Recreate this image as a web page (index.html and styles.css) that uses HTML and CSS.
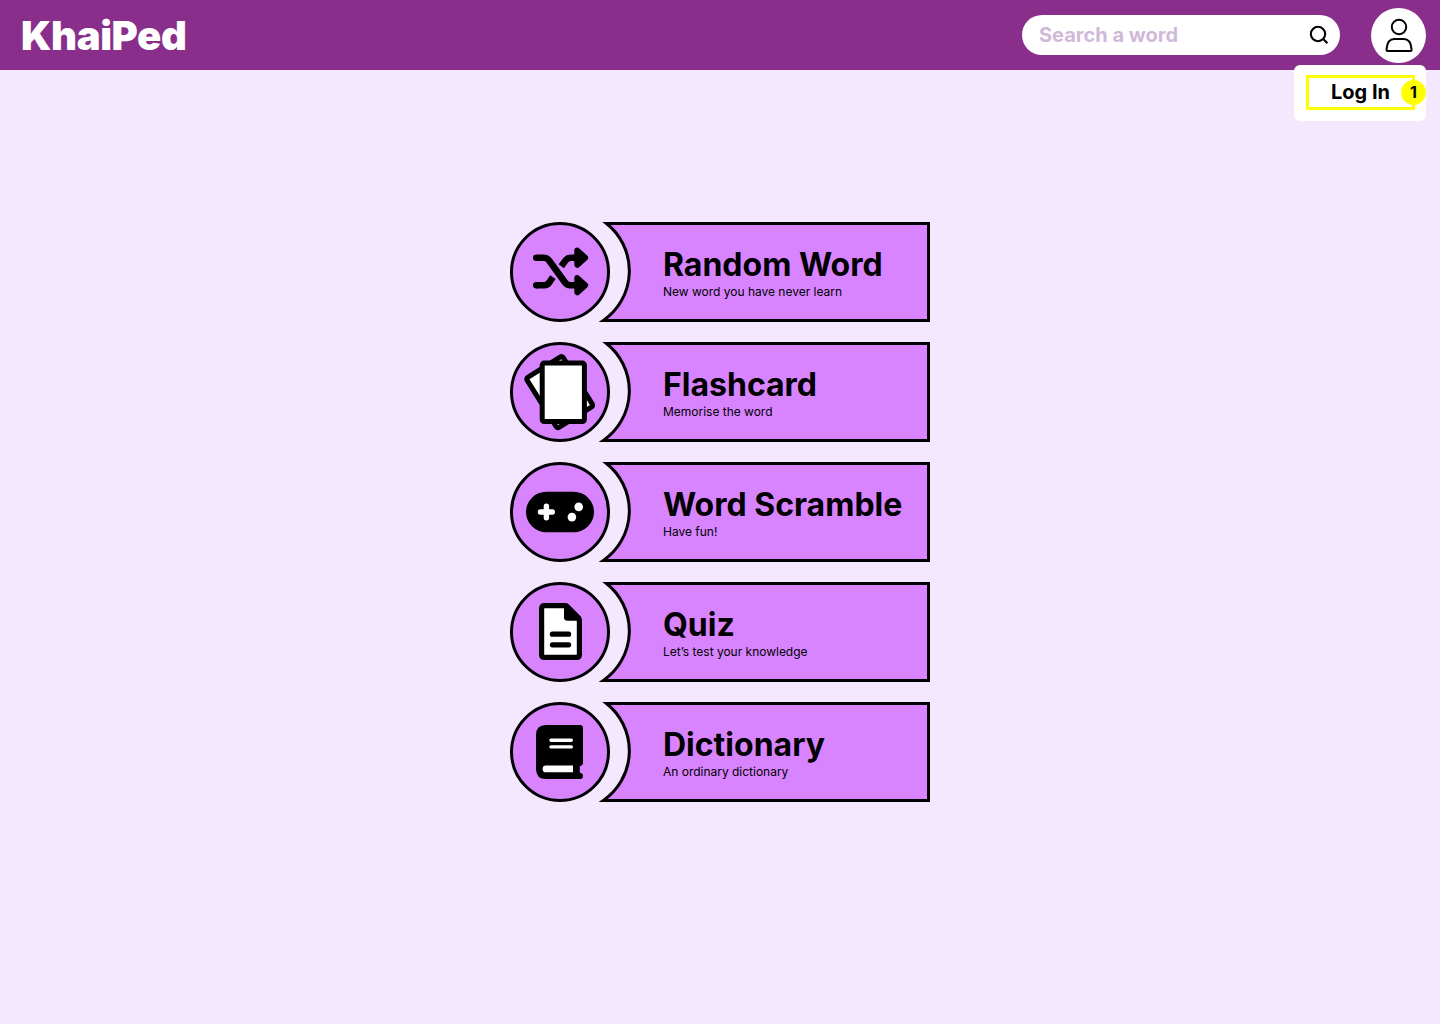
FILE: index.html
```html
<!DOCTYPE html>
<html lang="en">
<head>
<meta charset="utf-8">
<title>KhaiPed</title>
<link rel="stylesheet" href="styles.css">
</head>
<body>
<svg width="0" height="0" class="defs">
  <symbol id="plate" viewBox="0 0 420 100">
    <path d="M96.5 1.5H418.5V98.5H93.4A60.5 60.5 0 0 0 96.5 1.5Z" fill="#d884ff" stroke="#000" stroke-width="3" stroke-miterlimit="10"/>
    <circle cx="50" cy="50" r="48.5" fill="#d884ff" stroke="#000" stroke-width="3"/>
  </symbol>
</svg>
<header class="header">
  <a class="logo">KhaiPed</a>
  <div class="search">
    <span class="search-text">Search a word</span>
    <svg class="search-icon" width="22" height="22" viewBox="0 0 22 22" fill="none" stroke="#000" stroke-width="2.1">
      <circle cx="10" cy="10" r="7.2"/><path d="M14.8 14.6L19.4 19.2"/>
    </svg>
  </div>
  <div class="account">
    <div class="avatar">
      <svg width="55" height="55" viewBox="0 0 55 55" fill="none" stroke="#000" stroke-width="2">
        <circle cx="28" cy="19" r="7.2"/>
        <path d="M16.8 43C15.4 43 15.5 42.4 15.6 41C16.1 34.5 18.2 30.9 23.3 30.9H32.8C37.9 30.9 40 34.5 40.5 41C40.6 42.4 40.7 43 39.3 43Z"/>
      </svg>
    </div>
    <div class="menu">
      <div class="login">Log In</div>
      <span class="badge">1</span>
    </div>
  </div>
</header>
<main class="cards">
  <a class="card">
    <svg class="art" viewBox="0 0 420 100">
      <use href="#plate"/>
      <g fill="none" stroke="#000" stroke-width="6.6">
        <path d="M26.3 35.7H34Q37 35.7 38.9 38.2L54.7 60Q57 63.2 60.2 63.2H68" stroke-linecap="round"/>
        <path d="M26.3 63.2H34.5Q37.2 63.2 39 60.8L42.9 55.2"/>
        <path d="M51.3 44.2L55.4 38.6Q57.5 35.7 60.6 35.7H68"/>
      </g>
      <circle cx="26.3" cy="63.2" r="3.3"/>
      <path d="M67.3 28.6L75.1 35.7L67.3 42.8ZM67.3 56.1L75.1 63.2L67.3 70.3Z" stroke="#000" stroke-width="6" stroke-linejoin="round"/>
    </svg>
    <div class="copy"><h2>Random Word</h2><p>New word you have never learn</p></div>
  </a>
  <a class="card">
    <svg class="art" viewBox="0 0 420 100">
      <use href="#plate"/>
      <g fill="#fff" stroke="#000" stroke-width="5">
        <rect x="-21.3" y="-29.5" width="42.6" height="59" rx="2" transform="translate(49.7 50.1) rotate(-32)"/>
        <rect x="32.2" y="21.1" width="42.2" height="58.4" rx="2"/>
      </g>
    </svg>
    <div class="copy"><h2>Flashcard</h2><p>Memorise the word</p></div>
  </a>
  <a class="card">
    <svg class="art" viewBox="0 0 420 100">
      <use href="#plate"/>
      <rect x="16" y="29.7" width="68" height="40.6" rx="20.3"/>
      <path d="M36.4 44.3V55.7M30.5 50H42.3" fill="none" stroke="#fff" stroke-width="5.4" stroke-linecap="round"/>
      <circle cx="68.7" cy="44.9" r="4.3" fill="#fff"/><circle cx="61.9" cy="55.1" r="4.3" fill="#fff"/>
    </svg>
    <div class="copy"><h2>Word Scramble</h2><p>Have fun!</p></div>
  </a>
  <a class="card">
    <svg class="art" viewBox="0 0 420 100">
      <use href="#plate"/>
      <path d="M34.5 23.6H54.5Q56.3 23.6 57.5 24.8L68.2 35.5Q69.4 36.7 69.4 38.5V72.4Q69.4 75.4 66.4 75.4H34.5Q31.6 75.4 31.6 72.4V26.6Q31.6 23.6 34.5 23.6Z" fill="#fff" stroke="#000" stroke-width="5.2" stroke-linejoin="round"/>
      <path d="M54 21.5H57.5L71 35V38.7H57.5Q54 38.7 54 35.2Z"/>
      <path d="M42.4 52.2H58.6M42.4 62.8H58.6" stroke="#000" stroke-width="5.2" stroke-linecap="round"/>
    </svg>
    <div class="copy"><h2>Quiz</h2><p>Let’s test your knowledge</p></div>
  </a>
  <a class="card">
    <svg class="art" viewBox="0 0 420 100">
      <use href="#plate"/>
      <path d="M36 23H70Q73 23 73 26V60.5Q73 63.5 69.8 64.1V70.8Q73 71 73 73.9Q73 77 70 77H36Q26 77 26 67V33Q26 23 36 23Z"/>
      <path d="M36 63.5H63V70.3H36A3.4 3.4 0 0 1 36 63.5Z" fill="#fff"/>
      <path d="M41 38.2H61.3M41 44.9H61.3" stroke="#fff" stroke-width="3.4" stroke-linecap="round"/>
    </svg>
    <div class="copy"><h2>Dictionary</h2><p>An ordinary dictionary</p></div>
  </a>
</main>
</body>
</html>
```

FILE: styles.css
```css
* { box-sizing: border-box; }
body { margin: 0; min-height: 1024px; background: #f4e8ff; color: #000; font-family: Inter, sans-serif; }
.defs { position: absolute; }
.header { display: flex; align-items: center; height: 70px; padding: 0 14px 0 21px; background: #8a2e8b; }
.logo { color: #fff; font-size: 40px; font-weight: 900; line-height: 48px; letter-spacing: -0.009em; padding-top: 2px; margin-right: auto; }
.search { display: flex; align-items: center; justify-content: space-between; width: 318px; height: 40px; padding: 0 10px 0 17px; border-radius: 20px; background: #fff; margin-right: 31px; }
.search-text { color: #d0b9d8; font-size: 20px; font-weight: 700; line-height: 24px; }
.search-icon { display: block; }
.account { position: relative; padding-top: 1px; }
.avatar { width: 55px; height: 55px; border-radius: 50%; background: #fff; }
.avatar svg { display: block; }
.menu { position: absolute; top: 58px; right: 0; width: 132px; height: 56px; padding: 10px 12px; border-radius: 6px; background: #fff; }
.login { display: flex; align-items: center; justify-content: center; width: 109px; height: 35px; padding-bottom: 2px; border: 3px solid #ff0; font-size: 20px; font-weight: 700; line-height: 24px; }
.badge { position: absolute; top: 15px; right: 0; width: 25px; height: 25px; border-radius: 50%; background: #ff0; font-size: 16px; font-weight: 700; line-height: 25px; text-align: center; }
.cards { display: flex; flex-direction: column; align-items: center; gap: 20px; padding-top: 152px; }
.card { display: grid; width: 420px; height: 100px; }
.art { grid-area: 1 / 1; display: block; width: 420px; height: 100px; }
.copy { grid-area: 1 / 1; padding: 23px 0 0 153px; }
.copy h2 { margin: 0; font-size: 32px; font-weight: 700; line-height: 39px; white-space: nowrap; }
.copy p { margin: 0; font-size: 12px; line-height: 15px; letter-spacing: -0.001em; }
```
